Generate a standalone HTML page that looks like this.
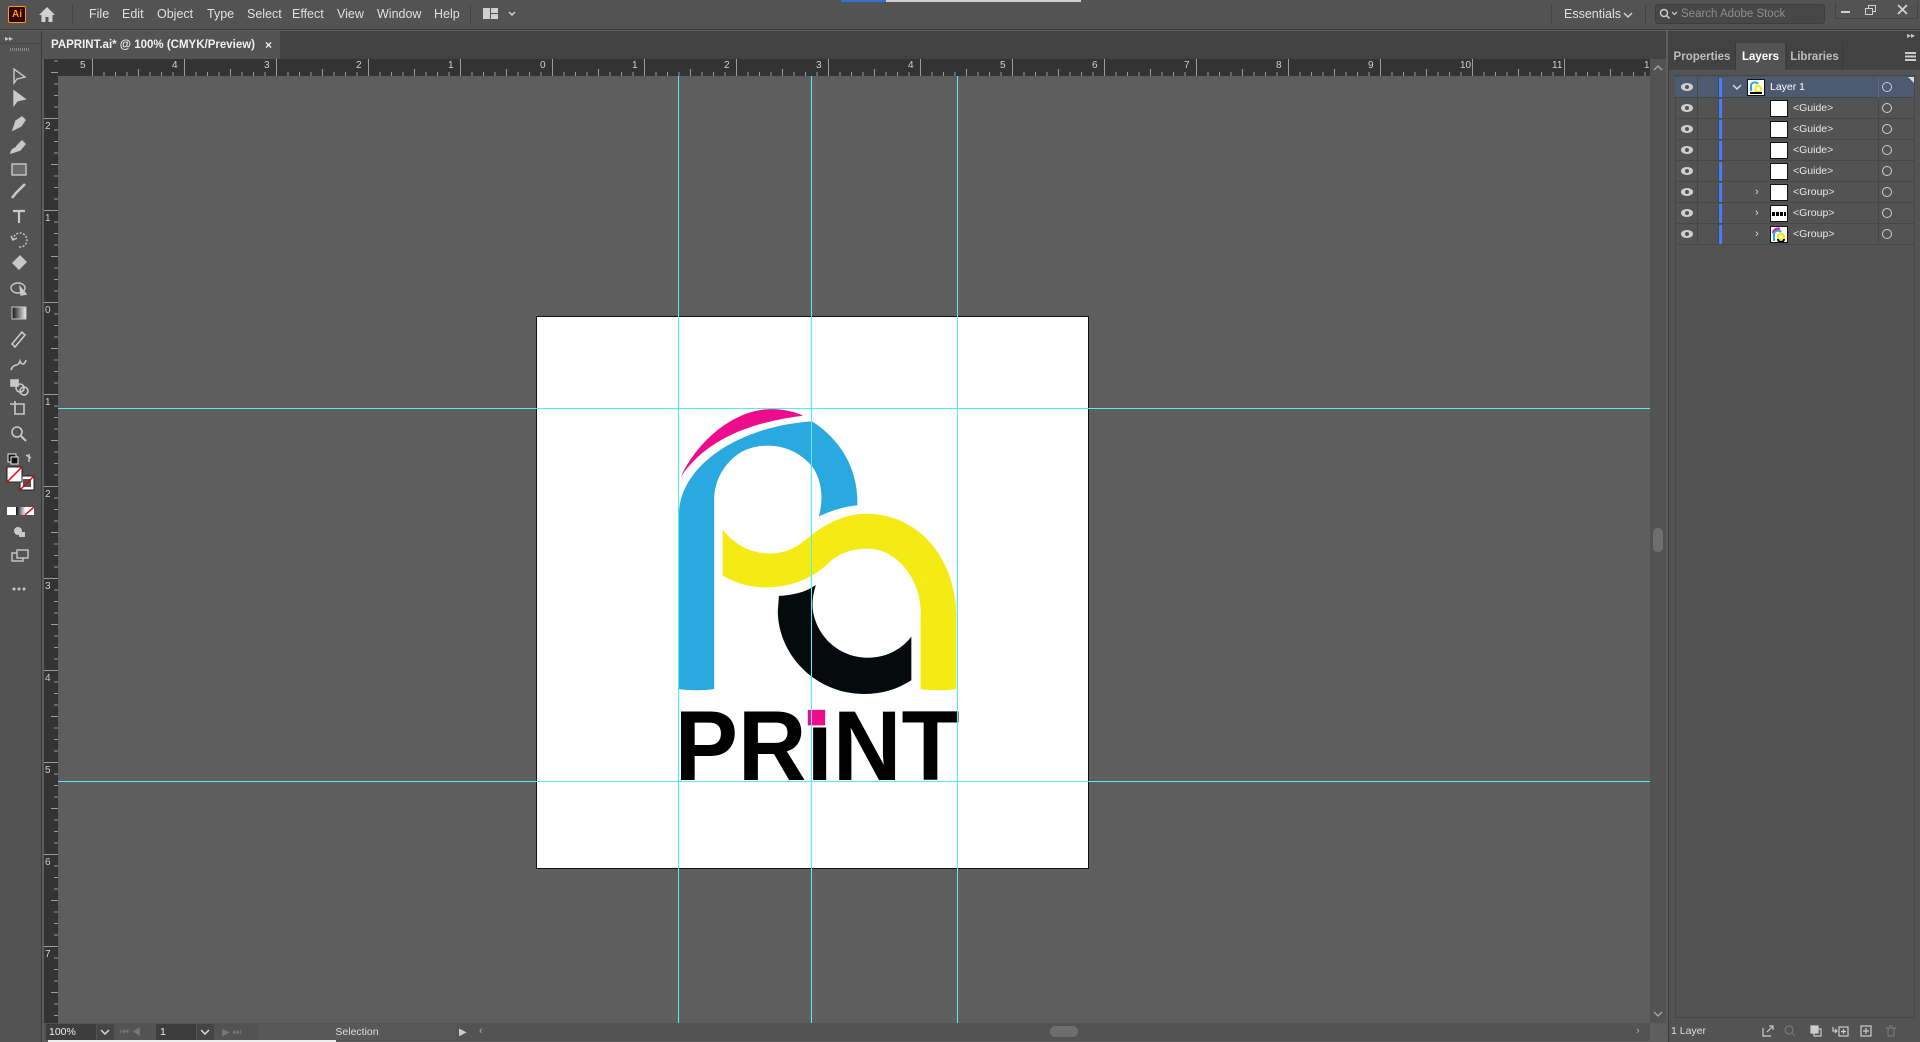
<!DOCTYPE html>
<html><head><meta charset="utf-8">
<style>
*{margin:0;padding:0;box-sizing:border-box}
body{width:1920px;height:1042px;background:#5e5e5e;position:relative;overflow:hidden;font-family:"Liberation Sans",sans-serif;font-size:12px;color:#d6d6d6}
.a{position:absolute}
.menu{left:0;top:0;width:1920px;height:30px;background:#535353;border-bottom:1px solid #3a3a3a}
.menu span.m{position:absolute;top:7px;font-size:12.5px;color:#e0e0e0}
.tabbar{left:0;top:31px;width:1666px;height:28px;background:#424242}
.tab{left:42px;top:31px;width:238px;height:28px;background:#535353;color:#f0f0f0;font-weight:bold;font-size:11.5px;padding:8px 0 0 9px}
.hr{left:44px;top:59px;width:1606px;height:17px;background:#333;overflow:hidden}
.vr{left:44px;top:59px;width:14px;height:964px;background:#333;overflow:hidden}
.tb{left:0;top:31px;width:42px;height:1011px;background:#535353;border-right:1px solid #3a3a3a}
.rl{position:absolute;font-size:10px;color:#cfcfcf}
.guide{position:absolute;background:#4cf0f5}
.panel{left:1668px;top:31px;width:252px;height:1011px;background:#535353;border-left:1px solid #3c3c3c}
.ptab{position:absolute;top:12px;height:27px;font-size:11.5px;padding-top:8px;text-align:center;color:#bdbdbd;font-weight:bold}
.row{position:absolute;left:6px;width:239px;height:21px;border-bottom:1px solid #474747}
.row .eye{position:absolute;left:6px;top:6px;width:12px;height:8px;border-radius:50%;background:#cfcfcf}
.row .eye:after{content:"";position:absolute;left:4px;top:2px;width:4px;height:4px;border-radius:50%;background:#535353}
.row .c1{position:absolute;left:22px;top:0;width:1px;height:21px;background:#474747}
.row .c2{position:absolute;left:43px;top:0;width:1px;height:21px;background:#474747}
.row .bb{position:absolute;left:44px;top:1px;width:3px;height:19px;background:#4a7cff}
.row .th{position:absolute;top:2px;width:18px;height:17px;background:#fff;border:1px solid #111}
.row .tx{position:absolute;top:4px;font-size:10.5px;color:#e8e8e8}
.row .ci{position:absolute;left:207px;top:5px;width:10px;height:10px;border:1px solid #cfcfcf;border-radius:50%}
.row .c3{position:absolute;left:203px;top:0;width:1px;height:21px;background:#474747}
.row .ch{position:absolute;top:4px;font-size:11px;color:#ddd}
.status{left:44px;top:1023px;width:1606px;height:18px;background:#535353}
</style></head><body>

<div class="a menu">
  <div class="a" style="left:8px;top:6px;width:18px;height:17px;background:#330000;border:1px solid #ff9a00;border-radius:2px;color:#ff9a00;font-size:10px;font-weight:bold;text-align:center;line-height:15px">Ai</div>
  <svg class="a" style="left:38px;top:6px" width="18" height="17" viewBox="0 0 18 17"><path d="M9 1 L1 9 H3.5 V16 H7.5 V11 H10.5 V16 H14.5 V9 H17 Z" fill="#d0d0d0"/></svg>
  <div class="a" style="left:72px;top:5px;width:1px;height:20px;background:#444"></div>
  <span class="m" style="left:89px">File</span>
  <span class="m" style="left:122px">Edit</span>
  <span class="m" style="left:157px">Object</span>
  <span class="m" style="left:207px">Type</span>
  <span class="m" style="left:247px">Select</span>
  <span class="m" style="left:292px">Effect</span>
  <span class="m" style="left:337px">View</span>
  <span class="m" style="left:377px">Window</span>
  <span class="m" style="left:434px">Help</span>
  <div class="a" style="left:470px;top:5px;width:1px;height:20px;background:#444"></div>
  <svg class="a" style="left:483px;top:7px" width="34" height="14" viewBox="0 0 34 14"><rect x="0" y="1" width="7" height="11" fill="#d0d0d0"/><rect x="8" y="1" width="7" height="5" fill="#d0d0d0"/><rect x="8" y="7" width="7" height="5" fill="#d0d0d0"/><path d="M26 5 L29 8 L32 5" stroke="#d0d0d0" stroke-width="1.5" fill="none"/></svg>
  <div class="a" style="left:841px;top:0;width:45px;height:2px;background:#2d72d2"></div>
  <div class="a" style="left:886px;top:0;width:195px;height:2px;background:#cfcfcf"></div>
  <div class="a" style="left:1551px;top:5px;width:1px;height:20px;background:#444"></div>
  <span class="m" style="left:1564px">Essentials</span>
  <svg class="a" style="left:1623px;top:11px" width="10" height="8"><path d="M1 2 L5 6 L9 2" stroke="#d0d0d0" stroke-width="1.5" fill="none"/></svg>
  <div class="a" style="left:1645px;top:5px;width:1px;height:20px;background:#444"></div>
  <div class="a" style="left:1655px;top:4px;width:170px;height:20px;background:#474747;border:1px solid #3e3e3e;border-radius:3px"></div>
  <svg class="a" style="left:1659px;top:8px" width="20" height="12"><circle cx="5" cy="5" r="3.5" stroke="#d0d0d0" stroke-width="1.4" fill="none"/><path d="M7.5 7.5 L10.5 10.5" stroke="#d0d0d0" stroke-width="1.5"/><path d="M13 4 L15.5 6.5 L18 4" stroke="#d0d0d0" stroke-width="1.2" fill="none"/></svg>
  <span class="a" style="left:1681px;top:8px;font-size:11.5px;color:#8e8e8e">Search Adobe Stock</span>
  <div class="a" style="left:1835px;top:2px;width:83px;height:17px;border:1px solid #444;border-top:none"></div>
  <div class="a" style="left:1841px;top:11px;width:9px;height:2px;background:#d0d0d0"></div>
  <div class="a" style="left:1868px;top:5px;width:8px;height:7px;border:1.5px solid #d0d0d0"></div>
  <div class="a" style="left:1865px;top:8px;width:8px;height:7px;border:1.5px solid #d0d0d0;background:#535353"></div>
  <svg class="a" style="left:1897px;top:4px" width="11" height="11"><path d="M1 1 L10 10 M10 1 L1 10" stroke="#d0d0d0" stroke-width="1.8"/></svg>
</div>

<div class="a tabbar"></div>
<div class="a tab">PAPRINT.ai* @ 100% (CMYK/Preview)<span style="position:absolute;left:223px;top:7px;font-size:12px">×</span></div>

<div class="a tb">
  <div class="a" style="left:5px;top:3px;font-size:8px;color:#ccc">▸▸</div>
  <div class="a" style="left:0;top:12px;width:42px;height:1px;background:#444"></div>
  <div class="a" style="left:10px;top:17px;width:20px;height:3px;background:repeating-linear-gradient(90deg,#888 0 1px,transparent 1px 2px)"></div>
  <svg class="a" style="left:0;top:-31px" width="42" height="640" viewBox="0 0 42 640">
    <g fill="none" stroke="#c9c9c9" stroke-width="1.4">
      <path d="M14 69 L14 83 L17 79 L25 77 Z"/>
      <path d="M14 91 L14 105 L17 101 L25 99 Z" fill="#c9c9c9"/>
      <path d="M13 130 L16 121 L22 117 L25 120 L21 126 Z" fill="#c9c9c9"/>
      <path d="M11 153 C12 147 16 150 17 146 L22 141 L25 144 L20 150 Z" fill="#c9c9c9"/>
      <rect x="12" y="164" width="14" height="11" fill="#6a6a6a"/>
      <path d="M12 198 L16 193 L25 184" stroke-width="2.5"/>
      <path d="M13 211 H25 M19 211 V223" stroke-width="2.2"/>
      <path d="M13 240 A7 7 0 1 1 19 247" stroke-dasharray="2 1.5"/><path d="M11 236 L13 240 L17 238"/>
      <path d="M13 263 L20 256 L26 262 L19 269 Z" fill="#c9c9c9"/>
      <ellipse cx="18" cy="288" rx="7" ry="5"/><path d="M20 287 L26 294 L21 295 Z" fill="#c9c9c9"/>
    </g>
    <defs><linearGradient id="g" x1="0" x2="1"><stop offset="0" stop-color="#111"/><stop offset="1" stop-color="#eee"/></linearGradient></defs>
    <rect x="12" y="307" width="14" height="12" fill="url(#g)" stroke="#c9c9c9"/>
    <g fill="none" stroke="#c9c9c9" stroke-width="1.6">
      <path d="M12 344 L22 332 L25 335 L15 347 Z"/>
      <path d="M11 370 C14 362 18 368 20 361 C22 366 25 364 26 360"/>
      <rect x="11" y="380" width="7" height="6" fill="#c9c9c9"/><circle cx="20" cy="388" r="4"/><circle cx="24" cy="391" r="4"/>
      <path d="M13 404 H24 V414 H15 V404 M10 404 H13 M15 401 V404"/>
      <circle cx="17" cy="432" r="5"/><path d="M21 436 L26 441" stroke-width="2"/>
    </g>
    <rect x="8" y="454" width="8" height="8" fill="#111" stroke="#eee"/><rect x="11" y="457" width="7" height="7" fill="#111" stroke="#eee"/>
    <path d="M26 455 L31 458 M29 454 V462" stroke="#c9c9c9" stroke-width="1.4" fill="none"/>
    <rect x="20" y="476" width="14" height="14" fill="#fff" stroke="#222"/><rect x="23" y="479" width="8" height="8" fill="#555"/>
    <rect x="7" y="467" width="15" height="15" fill="#fff" stroke="#222"/>
    <path d="M7 482 L22 467 M20 490 L34 476" stroke="#e00" stroke-width="1.5"/>
    <rect x="7" y="507" width="9" height="8" fill="#fff"/><rect x="16" y="507" width="9" height="8" fill="url(#g)"/><rect x="25" y="507" width="9" height="8" fill="#fff"/><path d="M25 515 L34 507" stroke="#e00" stroke-width="1.5"/>
    <circle cx="18" cy="531" r="4" fill="#c9c9c9"/><rect x="19" y="532" width="6" height="5" fill="#c9c9c9"/>
    <rect x="12" y="553" width="11" height="8" fill="none" stroke="#c9c9c9" stroke-width="1.4"/><rect x="17" y="550" width="11" height="8" fill="#535353" stroke="#c9c9c9" stroke-width="1.4"/>
    <circle cx="14" cy="589" r="1.5" fill="#c9c9c9"/><circle cx="19" cy="589" r="1.5" fill="#c9c9c9"/><circle cx="24" cy="589" r="1.5" fill="#c9c9c9"/>
  </svg>
</div>

<div class="a hr"></div>
<div class="a" style="left:44px;top:59px;width:14px;height:17px;background:#333"></div>
<div class="a vr">
  <div class="a" style="left:0;top:0;width:14px;height:964px;background:
    repeating-linear-gradient(180deg,#9a9a9a 0 1px,transparent 1px 92px) 0 -33px/14px 1100px no-repeat,
    repeating-linear-gradient(180deg,#9a9a9a 0 1px,transparent 1px 46px) 7px -33px/7px 1100px no-repeat,
    repeating-linear-gradient(180deg,#9a9a9a 0 1px,transparent 1px 11.5px) 10px -33px/4px 1100px no-repeat"></div>
</div>
<div class="a" style="left:58px;top:59px;width:1592px;height:17px;background:
    repeating-linear-gradient(90deg,#9a9a9a 0 1px,transparent 1px 92px) 34px 0/1592px 17px no-repeat,
    repeating-linear-gradient(90deg,#9a9a9a 0 1px,transparent 1px 46px) 34px 10px/1592px 7px no-repeat,
    repeating-linear-gradient(90deg,#9a9a9a 0 1px,transparent 1px 11.5px) 34px 13px/1592px 4px no-repeat,#333"></div>
<div class="a" style="left:58px;top:76px;width:1592px;height:947px;background:#5e5e5e"></div>
<span class="rl" style="left:80px;top:60px">5</span>
<span class="rl" style="left:172px;top:60px">4</span>
<span class="rl" style="left:264px;top:60px">3</span>
<span class="rl" style="left:356px;top:60px">2</span>
<span class="rl" style="left:448px;top:60px">1</span>
<span class="rl" style="left:540px;top:60px">0</span>
<span class="rl" style="left:632px;top:60px">1</span>
<span class="rl" style="left:724px;top:60px">2</span>
<span class="rl" style="left:816px;top:60px">3</span>
<span class="rl" style="left:908px;top:60px">4</span>
<span class="rl" style="left:1000px;top:60px">5</span>
<span class="rl" style="left:1092px;top:60px">6</span>
<span class="rl" style="left:1184px;top:60px">7</span>
<span class="rl" style="left:1276px;top:60px">8</span>
<span class="rl" style="left:1368px;top:60px">9</span>
<span class="rl" style="left:1460px;top:60px">10</span>
<span class="rl" style="left:1552px;top:60px">11</span>
<span class="rl" style="left:1644px;top:60px">12</span>
<span class="rl" style="left:45px;top:121px">2</span>
<span class="rl" style="left:45px;top:213px">1</span>
<span class="rl" style="left:45px;top:305px">0</span>
<span class="rl" style="left:45px;top:397px">1</span>
<span class="rl" style="left:45px;top:489px">2</span>
<span class="rl" style="left:45px;top:581px">3</span>
<span class="rl" style="left:45px;top:673px">4</span>
<span class="rl" style="left:45px;top:765px">5</span>
<span class="rl" style="left:45px;top:857px">6</span>
<span class="rl" style="left:45px;top:949px">7</span>

<div class="a" style="left:1650px;top:59px;width:16px;height:964px;background:#535353"></div>
<div class="a" style="left:1653px;top:528px;width:10px;height:24px;background:#6e6e6e;border-radius:5px"></div>
<svg class="a" style="left:1653px;top:64px" width="10" height="8"><path d="M1 6 L5 2 L9 6" stroke="#aaa" stroke-width="1.3" fill="none"/></svg>
<svg class="a" style="left:1653px;top:1010px" width="10" height="8"><path d="M1 2 L5 6 L9 2" stroke="#aaa" stroke-width="1.3" fill="none"/></svg>

<div class="a" style="left:536px;top:316px;width:553px;height:553px;background:#fff;border:1px solid #111"></div>
<svg class="a" style="left:520px;top:300px" width="580" height="580" viewBox="0 0 1568 1568">
  <path d="M435,478 C480,380 580,295 680,295 C720,295 750,305 765,313 C620,330 500,380 435,478 Z" fill="#ec0c8c"/>
  <path d="M430,1052 L430,570 C440,440 600,340 790,328 C870,380 915,460 912,555 C870,560 840,570 808,585 C820,540 818,490 790,450 C740,390 660,380 600,410 C550,440 525,490 525,540 L525,1052 C495,1056 460,1056 430,1052 Z" fill="#29a9e0"/>
  <path d="M700,800 C750,797 780,785 800,770 C790,800 788,830 795,855 C812,920 870,967 940,967 C995,967 1035,940 1058,910 L1058,1028 C1020,1052 980,1065 930,1065 C800,1065 697,960 697,840 Z" fill="#050a0c"/>
  <path d="M548,620 C600,690 700,710 770,650 C830,600 880,578 940,578 C1080,580 1180,700 1180,860 L1180,1052 C1150,1056 1110,1056 1083,1052 L1083,860 C1090,760 1020,672 940,672 C890,672 855,690 830,715 C760,780 640,800 548,745 Z" fill="#f5eb14"/>
  <text x="418" y="1298" font-family="Liberation Sans, sans-serif" font-weight="bold" font-size="268" textLength="770" lengthAdjust="spacingAndGlyphs" fill="#000">PRiNT</text>
  <rect x="770" y="1100" width="62" height="52" fill="#fff"/>
  <rect x="778" y="1108" width="47" height="42" fill="#ec0c8c"/>
</svg>

<div class="guide" style="left:678px;top:76px;width:1px;height:947px"></div>
<div class="guide" style="left:811px;top:76px;width:1px;height:947px"></div>
<div class="guide" style="left:957px;top:76px;width:1px;height:947px"></div>
<div class="guide" style="left:58px;top:408px;width:1592px;height:1px"></div>
<div class="guide" style="left:58px;top:781px;width:1592px;height:1px"></div>

<div class="a status"></div>
<div class="a" style="left:46px;top:1024px;width:50px;height:16px;background:#3d3d3d;color:#eee;font-size:10.5px;padding:2px 3px">100%</div>
<div class="a" style="left:97px;top:1024px;width:17px;height:16px;background:#454545"></div>
<svg class="a" style="left:100px;top:1029px" width="10" height="7"><path d="M1 1 L5 5 L9 1" stroke="#ddd" stroke-width="1.4" fill="none"/></svg>
<div class="a" style="left:120px;top:1027px;font-size:10px;color:#777">⏮ ◀</div>
<div class="a" style="left:156px;top:1024px;width:40px;height:16px;background:#3d3d3d;color:#eee;font-size:10.5px;padding:2px 4px">1</div>
<div class="a" style="left:197px;top:1024px;width:17px;height:16px;background:#454545"></div>
<svg class="a" style="left:200px;top:1029px" width="10" height="7"><path d="M1 1 L5 5 L9 1" stroke="#ddd" stroke-width="1.4" fill="none"/></svg>
<div class="a" style="left:222px;top:1027px;font-size:10px;color:#777">▶ ⏭</div>
<div class="a" style="left:258px;top:1024px;width:198px;height:16px;background:#585858;color:#ddd;font-size:10.5px;text-align:center;padding-top:2px">Selection</div>
<div class="a" style="left:459px;top:1027px;font-size:10px;color:#ccc">▶</div>
<div class="a" style="left:479px;top:1025px;font-size:11px;color:#aaa">‹</div>
<div class="a" style="left:1050px;top:1026px;width:28px;height:11px;background:#6e6e6e;border-radius:5px"></div>
<div class="a" style="left:1636px;top:1025px;font-size:11px;color:#aaa">›</div>
<div class="a" style="left:48px;top:1040px;width:288px;height:2px;background:#eee"></div>

<div class="a panel">
  <div class="a" style="left:0;top:0;width:252px;height:12px;background:#424242"></div>
  <div class="a" style="right:5px;top:0;font-size:8px;color:#ccc">▸▸</div>
  <div class="a" style="left:0;top:12px;width:252px;height:27px;background:#424242"></div>
  <div class="ptab" style="left:0;width:67px;border-right:1px solid #3a3a3a">Properties</div>
  <div class="ptab" style="left:67px;width:49px;background:#535353;color:#fff">Layers</div>
  <div class="ptab" style="left:117px;width:57px;border-right:1px solid #3a3a3a;border-left:1px solid #3a3a3a">Libraries</div>
  <div class="a" style="left:236px;top:21px;width:11px;height:1.5px;background:#ccc;box-shadow:0 3.5px 0 #ccc,0 7px 0 #ccc"></div>
  <div class="a" style="left:6px;top:44px;width:240px;height:943px;border:1px solid #474747"></div>

  <div class="row" style="top:46px;background:#4c5b70">
    <div class="eye"></div><div class="c1"></div><div class="c2"></div><div class="bb"></div>
    <svg class="a" style="left:57px;top:7px" width="10" height="7"><path d="M1 1 L5 5 L9 1" stroke="#ddd" stroke-width="1.4" fill="none"/></svg>
    <div class="th" style="left:72px"><svg width="16" height="15" viewBox="0 0 16 15"><path d="M3 11 V5 A4 4 0 0 1 10 4" stroke="#29a9e0" stroke-width="2" fill="none"/><circle cx="10" cy="9" r="3" stroke="#f5eb14" stroke-width="2" fill="none"/><rect x="2" y="12" width="12" height="2" fill="#000"/></svg></div>
    <div class="tx" style="left:95px;color:#fff">Layer 1</div>
    <div class="c3" style="background:#5a6a80"></div><div class="ci"></div>
    <div class="a" style="right:0;top:0;width:0;height:0;border-left:6px solid transparent;border-top:6px solid #ddd"></div>
  </div>
  <div class="row" style="top:67px"><div class="eye"></div><div class="c1"></div><div class="c2"></div><div class="bb"></div><div class="th" style="left:95px"></div><div class="tx" style="left:118px">&lt;Guide&gt;</div><div class="c3"></div><div class="ci"></div></div>
  <div class="row" style="top:88px"><div class="eye"></div><div class="c1"></div><div class="c2"></div><div class="bb"></div><div class="th" style="left:95px"></div><div class="tx" style="left:118px">&lt;Guide&gt;</div><div class="c3"></div><div class="ci"></div></div>
  <div class="row" style="top:109px"><div class="eye"></div><div class="c1"></div><div class="c2"></div><div class="bb"></div><div class="th" style="left:95px"></div><div class="tx" style="left:118px">&lt;Guide&gt;</div><div class="c3"></div><div class="ci"></div></div>
  <div class="row" style="top:130px"><div class="eye"></div><div class="c1"></div><div class="c2"></div><div class="bb"></div><div class="th" style="left:95px"></div><div class="tx" style="left:118px">&lt;Guide&gt;</div><div class="c3"></div><div class="ci"></div></div>
  <div class="row" style="top:151px"><div class="eye"></div><div class="c1"></div><div class="c2"></div><div class="bb"></div><div class="ch" style="left:80px">›</div><div class="th" style="left:95px"></div><div class="tx" style="left:118px">&lt;Group&gt;</div><div class="c3"></div><div class="ci"></div></div>
  <div class="row" style="top:172px"><div class="eye"></div><div class="c1"></div><div class="c2"></div><div class="bb"></div><div class="ch" style="left:80px">›</div><div class="th" style="left:95px"><div style="margin:6px 1px 0;height:4px;background:repeating-linear-gradient(90deg,#000 0 3px,#fff 3px 4px)"></div></div><div class="tx" style="left:118px">&lt;Group&gt;</div><div class="c3"></div><div class="ci"></div></div>
  <div class="row" style="top:193px"><div class="eye"></div><div class="c1"></div><div class="c2"></div><div class="bb"></div><div class="ch" style="left:80px">›</div><div class="th" style="left:95px"><svg width="16" height="15" viewBox="0 0 16 15"><path d="M2 6 A5 5 0 0 1 9 2" stroke="#ec0c8c" stroke-width="2" fill="none"/><path d="M3 14 V7 A4 4 0 0 1 10 5" stroke="#29a9e0" stroke-width="2" fill="none"/><circle cx="10" cy="10" r="3" stroke="#f5eb14" stroke-width="2.4" fill="none"/><path d="M7 12 A3 3 0 0 0 13 12" stroke="#000" stroke-width="2" fill="none"/></svg></div><div class="tx" style="left:118px">&lt;Group&gt;</div><div class="c3"></div><div class="ci"></div></div>

  <div class="a" style="left:0;top:991px;width:252px;height:20px;background:#535353"></div>
  <div class="a" style="left:2px;top:994px;font-size:10.5px;color:#ddd">1 Layer</div>
  <svg class="a" style="left:92px;top:993px" width="150" height="14" viewBox="0 0 150 14">
    <g fill="none" stroke="#ccc" stroke-width="1.2">
      <path d="M2 4 V12 H10 M6 8 L11 3 M8 2 H12 V6"/>
      <circle cx="28" cy="6" r="4" stroke="#777"/><path d="M31 9 L34 12" stroke="#777"/>
      <rect x="50" y="2" width="7" height="7" fill="#ccc"/><rect x="53" y="5" width="7" height="7"/>
      <path d="M72 3 V7 H76 M74 5 L76 7 L74 9"/><rect x="78" y="3" width="9" height="9"/><path d="M82.5 5 V10 M80 7.5 H85"/>
      <rect x="100" y="2" width="10" height="10"/><path d="M105 4 V10 M102 7 H108"/>
      <path d="M125 4 H135 M127 4 V12 H133 V4 M128 2 H132" stroke="#777"/>
    </g>
  </svg>
</div>
</body></html>
